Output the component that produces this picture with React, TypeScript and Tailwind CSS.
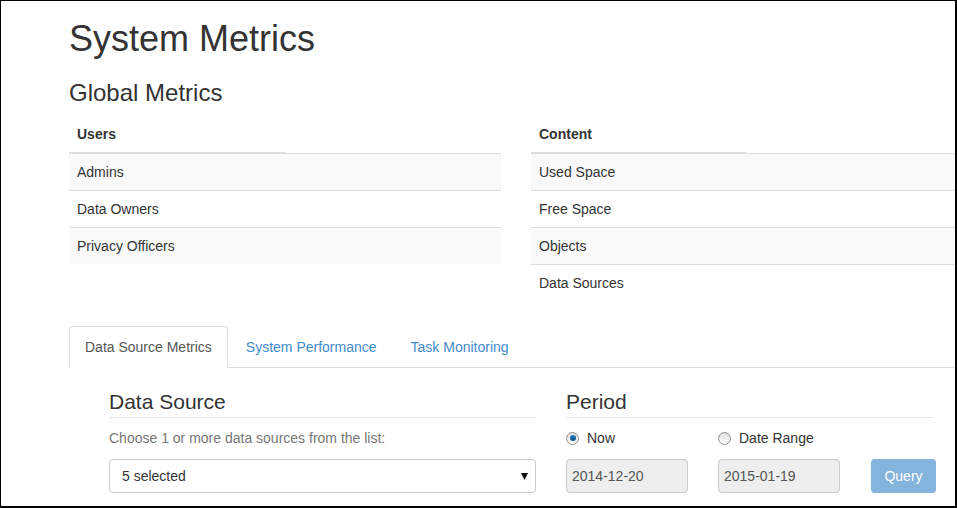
const users = ["Admins", "Data Owners", "Privacy Officers"];
const content = ["Used Space", "Free Space", "Objects", "Data Sources"];

const MetricTable = ({ title, rows }: { title: string; rows: string[] }) => {
  return (
    <div className="w-[432px] shrink-0">
      <div className="flex">
        <div className="w-1/2 px-2 py-2 font-bold border-b-2 border-[#ddd]">{title}</div>
        <div className="w-1/2 border-b border-[#ddd]"></div>
      </div>
      {rows.map((r, i) => (
        <div
          key={r}
          className={
            (i % 2 === 0 ? "bg-[#f9f9f9] " : "bg-white ") +
            (i > 0 ? "border-t border-[#ddd] h-[37px] " : "h-[36px] ") +
            "px-2 py-2"
          }
        >
          {r}
        </div>
      ))}
    </div>
  );
};

const Radio = ({ checked }: { checked?: boolean }) => (
  <span className="flex h-[13px] w-[13px] items-center justify-center rounded-full border border-[#8f8f8f] bg-gradient-to-b from-[#dedede] to-white">
    {checked && <span className="h-[6px] w-[6px] rounded-full bg-gradient-to-b from-[#1f7fc4] to-[#0d4f8a]"></span>}
  </span>
);

const App = () => {
  return (
    <div className="w-[957px] h-[508px] overflow-hidden bg-white border-l border-t border-r-2 border-b-2 border-black font-['Liberation_Sans',Arial,sans-serif] text-[14px] leading-[20px] text-[#333]">
      <div className="pl-[68px] w-[1000px]">
        <h1 className="mt-[18px] text-[36px] leading-[40px]">System Metrics</h1>
        <h2 className="mt-[21px] text-[24px] leading-[26px]">Global Metrics</h2>

        <div className="mt-[10px] flex gap-x-[30px]">
          <MetricTable title="Users" rows={users} />
          <MetricTable title="Content" rows={content} />
        </div>

        <ul className="mt-[25px] flex border-b border-[#ddd] w-[932px]">
          <li className="-mb-px mr-[2px]">
            <a className="block rounded-t-[4px] border border-[#ddd] border-b-transparent bg-white px-[15px] py-[10px] text-[#555]">
              Data Source Metrics
            </a>
          </li>
          <li className="-mb-px mr-[2px]">
            <a className="block border border-transparent px-[15px] py-[10px] text-[#428bca]">System Performance</a>
          </li>
          <li className="-mb-px mr-[2px]">
            <a className="block border border-transparent px-[15px] py-[10px] text-[#428bca]">Task Monitoring</a>
          </li>
        </ul>

        <div className="pl-[40px] pt-[19px] flex gap-x-[30px]">
          <div className="w-[427px] shrink-0">
            <div className="text-[21px] leading-[30px] border-b border-[#e5e5e5]">Data Source</div>
            <div className="mt-[10px] text-[#777]">Choose 1 or more data sources from the list:</div>
            <div className="mt-[11px] flex h-[34px] items-center justify-between rounded-[4px] border border-[#ccc] pl-[12px] pr-[7px]">
              <span>5 selected</span>
              <svg width="7" height="8" viewBox="0 0 7 8">
                <path d="M0 1 H7 L3.5 8 Z" fill="#111" />
              </svg>
            </div>
          </div>

          <div className="w-[367px] shrink-0">
            <div className="text-[21px] leading-[30px] border-b border-[#e5e5e5]">Period</div>
            <div className="mt-[10px] flex">
              <label className="flex w-[152px] shrink-0 items-center gap-[8px]">
                <Radio checked />
                <span>Now</span>
              </label>
              <label className="flex items-center gap-[8px]">
                <Radio />
                <span>Date Range</span>
              </label>
            </div>
            <div className="mt-[11px] flex">
              <div className="w-[152px] shrink-0">
                <div className="flex h-[34px] w-[122px] items-center rounded-[4px] border border-[#ccc] bg-[#eee] px-[5px] text-[#555]">
                  2014-12-20
                </div>
              </div>
              <div className="w-[153px] shrink-0">
                <div className="flex h-[34px] w-[122px] items-center rounded-[4px] border border-[#ccc] bg-[#eee] px-[5px] text-[#555]">
                  2015-01-19
                </div>
              </div>
              <button className="h-[34px] w-[65px] shrink-0 rounded-[4px] bg-[#84b3dc] text-white">Query</button>
            </div>
          </div>
        </div>
      </div>
    </div>
  );
};

export default App;
